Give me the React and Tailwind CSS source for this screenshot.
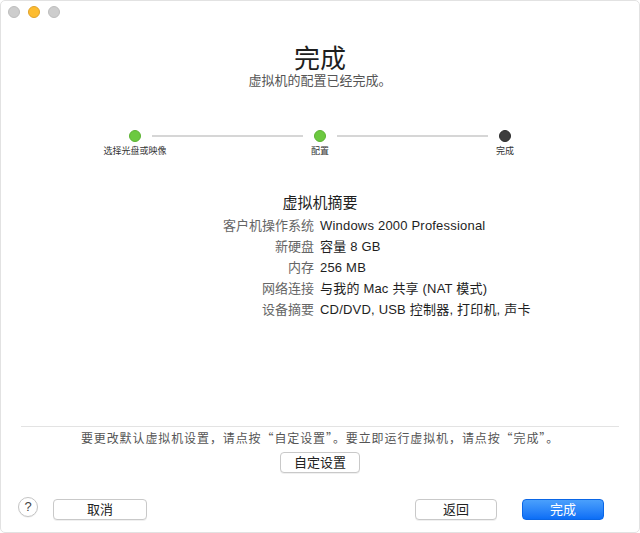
import React from 'react';

const FONT = "font-['Liberation_Sans','Noto_Sans_CJK_SC',sans-serif]";

const summary = [
  ['客户机操作系统', 'Windows 2000 Professional'],
  ['新硬盘', '容量 8 GB'],
  ['内存', '256 MB'],
  ['网络连接', '与我的 Mac 共享 (NAT 模式)'],
  ['设备摘要', 'CD/DVD, USB 控制器, 打印机, 声卡'],
];

const Step = ({ label, done }) => (
  <div className="flex flex-col items-center w-3">
    <div className={`w-3 h-3 rounded-full ${done ? 'bg-[#6cc940] border border-[#5cb333]' : 'bg-[#3d3d3d] border border-[#2e2e2e]'}`} />
    <span className="mt-[3px] text-[9px] leading-[12px] text-[#333] whitespace-nowrap">{label}</span>
  </div>
);

const Button = ({ children, className = '' }) => (
  <button className={`h-[21px] rounded-[4px] bg-white border border-[#c9c9c9] shadow-[0_1px_0_rgba(0,0,0,0.06)] text-[13px] leading-[19px] text-[#222] ${className}`}>
    {children}
  </button>
);

export default function App() {
  return (
    <div className={`w-[640px] h-[533px] bg-white flex flex-col border border-[#e2e2e2] rounded-[5px] overflow-hidden ${FONT}`}>
      {/* title bar */}
      <div className="h-[22px] flex items-center gap-2 pl-[7px] shrink-0">
        <span className="w-3 h-3 rounded-full bg-[#cdcdcd] border border-[#bdbdbd]" />
        <span className="w-3 h-3 rounded-full bg-[#fdbc30] border border-[#e0a22a]" />
        <span className="w-3 h-3 rounded-full bg-[#cdcdcd] border border-[#bdbdbd]" />
      </div>

      <h1 className="mt-[22px] text-center text-[26px] leading-[28px] text-[#1e1e1e]">完成</h1>
      <p className="text-center text-[13px] leading-[16px] text-[#555]">虚拟机的配置已经完成。</p>

      {/* stepper */}
      <div className="mt-[41px] w-[382px] mx-auto flex items-start">
        <Step label="选择光盘或映像" done />
        <div className="flex-1 mx-[11px] mt-[5px] h-[2px] bg-[#d6d6d6]" />
        <Step label="配置" done />
        <div className="flex-1 mx-[11px] mt-[5px] h-[2px] bg-[#d6d6d6]" />
        <Step label="完成" />
      </div>

      {/* summary */}
      <h2 className="mt-[36px] text-center text-[15px] leading-[20px] text-[#1e1e1e]">虚拟机摘要</h2>
      <div className="mt-[2px] grid grid-cols-[313px_1fr] gap-x-[6px] text-[13px] leading-[21px]">
        {summary.map(([k, v]) => (
          <React.Fragment key={k}>
            <span className="text-right text-[#666]">{k}</span>
            <span className="text-[#1e1e1e] tracking-[0.2px]">{v}</span>
          </React.Fragment>
        ))}
      </div>

      <div className="flex-1" />

      <div className="mx-[20px] h-px bg-[#e3e3e3]" />
      <p className="mt-[3px] text-center text-[12px] leading-[16px] tracking-[0.9px] text-[#555] font-['Noto_Sans_CJK_SC',sans-serif]">
        要更改默认虚拟机设置，请点按“自定设置”。要立即运行虚拟机，请点按“完成”。
      </p>
      <div className="mt-[6px] flex justify-center">
        <Button className="w-[80px]">自定设置</Button>
      </div>

      <div className="mt-[26px] mb-[12px] flex items-center pl-[17px] pr-[35px]">
        <span className="w-5 h-5 -translate-y-[3px] rounded-full border border-[#c4c4c4] bg-white flex items-center justify-center text-[13px] text-[#444] shadow-[0_1px_0_rgba(0,0,0,0.05)]">?</span>
        <Button className="ml-[15px] w-[94px]">取消</Button>
        <div className="flex-1" />
        <Button className="w-[82px]">返回</Button>
        <button className="ml-[25px] w-[82px] h-[21px] rounded-[4px] bg-gradient-to-b from-[#4aa0fc] to-[#0b6ef6] border border-[#0a66e6] text-[13px] leading-[19px] text-white">
          完成
        </button>
      </div>
    </div>
  );
}
